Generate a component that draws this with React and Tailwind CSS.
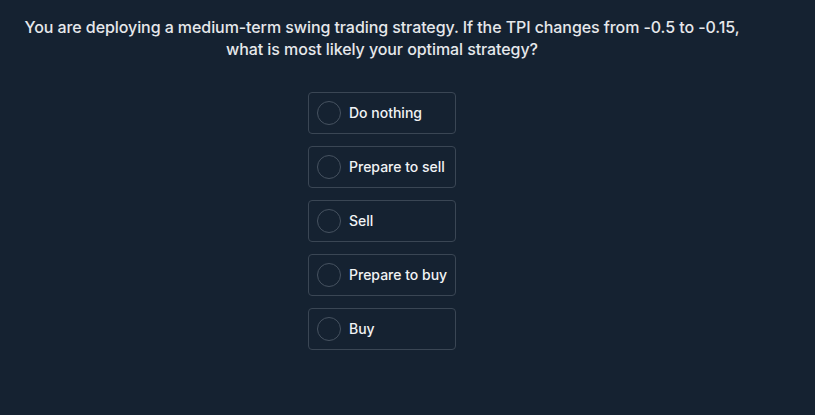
import { useState } from 'react';

const options = ['Do nothing', 'Prepare to sell', 'Sell', 'Prepare to buy', 'Buy'];

export default function App() {
  const [selected, setSelected] = useState(null);

  return (
    <div
      className="min-h-[415px] w-full bg-[#152231] text-[#e8eaed]"
      style={{ fontFamily: 'Inter, "Noto Sans", sans-serif' }}
    >
      <div className="w-[764px] pt-[16px] flex flex-col items-center">
        <h1 className="text-[16px] leading-[22px] font-medium tracking-[-0.005em] text-center text-[#e6e8eb] whitespace-nowrap">
          You are deploying a medium-term swing trading strategy. If the TPI changes from -0.5 to -0.15,
          <br />
          what is most likely your optimal strategy?
        </h1>

        <div className="mt-[32px] flex flex-col gap-3">
          {options.map((opt) => (
            <button
              key={opt}
              onClick={() => setSelected(opt)}
              className="w-[148px] h-[42px] flex items-center gap-2 px-2 rounded-[4px] border border-[#3a4654] text-left"
            >
              <span
                className={`w-6 h-6 rounded-full border flex-shrink-0 ${
                  selected === opt ? 'border-[#9aa3ad] bg-[#2b3a4a]' : 'border-[#465260]'
                }`}
              ></span>
              <span className="text-sm font-medium text-[#f1f3f5] whitespace-nowrap">{opt}</span>
            </button>
          ))}
        </div>
      </div>
    </div>
  );
}
